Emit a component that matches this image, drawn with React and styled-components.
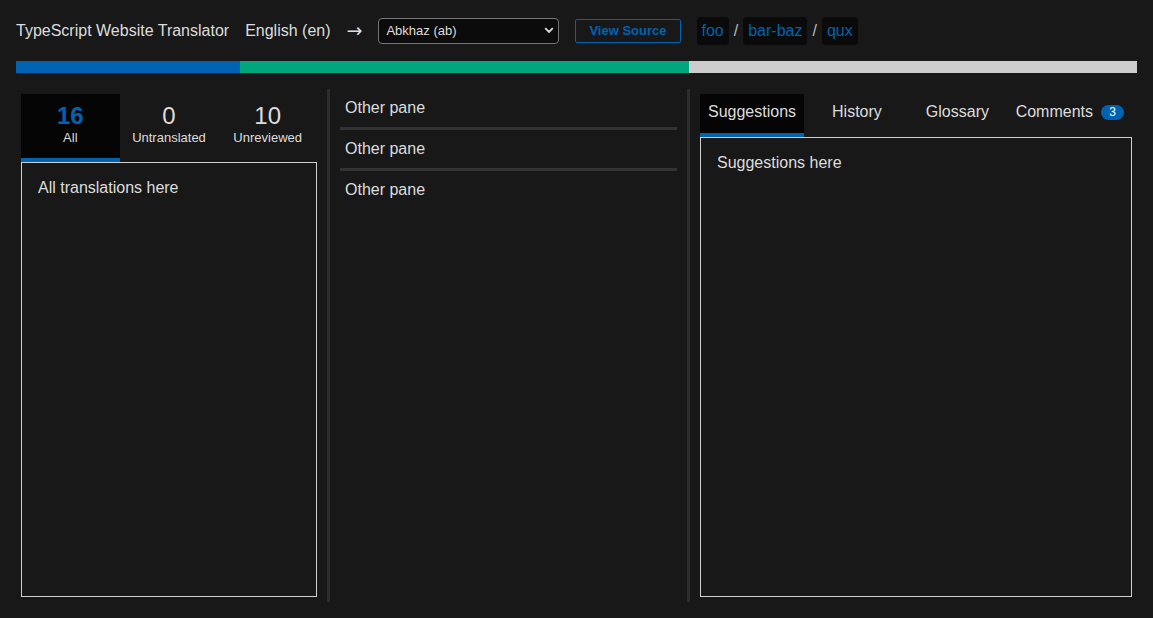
import React from 'react';
import styled, { createGlobalStyle } from 'styled-components';

const BLUE = '#0063b1';

const GlobalStyle = createGlobalStyle`
  html, body {
    margin: 0;
    padding: 0;
    background: #181818;
  }
  body {
    font-family: "Liberation Sans", Arial, sans-serif;
    color: #dddddd;
  }
  * {
    box-sizing: border-box;
  }
`;

const Page = styled.div`
  height: 100vh;
  padding: 16px;
  display: flex;
  flex-direction: column;
`;

const Header = styled.header`
  display: flex;
  align-items: center;
  gap: 16px;
  height: 28px;
  font-size: 16px;
  padding-top: 1px;
`;

const HeaderText = styled.span`
  color: #dddddd;
  white-space: nowrap;
`;

const Arrow = styled.span`
  font-family: "DejaVu Sans", sans-serif;
  font-size: 19px;
  color: #dddddd;
  margin-top: -2px;
`;

const SelectWrap = styled.div`
  position: relative;
  width: 181px;
  height: 26px;
`;

const Select = styled.select`
  appearance: none;
  width: 100%;
  height: 100%;
  padding: 0 24px 0 7px;
  background: #0b0b0b;
  color: #dddddd;
  border: 1px solid #767676;
  border-radius: 4px;
  font-family: "Liberation Sans", Arial, sans-serif;
  font-size: 13px;
  outline: none;
`;

const Chevron = styled.svg`
  position: absolute;
  right: 5px;
  top: 9px;
  pointer-events: none;
`;

const SourceButton = styled.button`
  height: 24px;
  padding: 0 13px;
  background: transparent;
  border: 1px solid ${BLUE};
  border-radius: 2px;
  color: ${BLUE};
  font-family: "Liberation Sans", Arial, sans-serif;
  font-weight: bold;
  font-size: 13px;
  cursor: pointer;
`;

const Crumbs = styled.nav`
  display: flex;
  align-items: center;
  gap: 5px;
`;

const Crumb = styled.a`
  display: flex;
  align-items: center;
  height: 28px;
  padding: 0 5px;
  background: #0a0a0a;
  border-radius: 4px;
  color: ${BLUE};
  font-size: 16px;
  text-decoration: none;
`;

const Slash = styled.span`
  color: #bbbbbb;
  font-size: 16px;
`;

const Progress = styled.div`
  display: flex;
  height: 12px;
  margin-top: 17px;
  margin-bottom: 16px;
`;

const ProgressPart = styled.div`
  height: 100%;
  background: ${(p) => p.$color};
`;

const Main = styled.main`
  flex: 1;
  display: flex;
  min-height: 0;
`;

const Pane = styled.section`
  flex: ${(p) => p.$grow} 1 0;
  display: flex;
  flex-direction: column;
  padding: ${(p) => (p.$flush ? '0 5px 5px' : '5px')};
  min-width: 0;
`;

const Splitter = styled.div`
  width: 3px;
  margin: 0 5px;
  background: #2c2c2c;
`;

const CountTabs = styled.div`
  display: flex;
`;

const CountTab = styled.button`
  flex: 1;
  display: flex;
  flex-direction: column;
  align-items: center;
  padding: 8px 0 13px;
  background: ${(p) => (p.$active ? '#050505' : 'transparent')};
  border: none;
  border-bottom: 4px solid ${(p) => (p.$active ? BLUE : 'transparent')};
  font-family: "Liberation Sans", Arial, sans-serif;
  color: #dddddd;
  cursor: pointer;
`;

const Count = styled.span`
  font-size: 24px;
  line-height: 28px;
  font-weight: ${(p) => (p.$active ? 'bold' : 'normal')};
  color: ${(p) => (p.$active ? BLUE : '#dddddd')};
`;

const CountLabel = styled.span`
  font-size: 13px;
  line-height: 15px;
`;

const Box = styled.div`
  flex: 1;
  border: 1px solid #cfcfcf;
  padding: 16px;
  font-size: 16px;
  line-height: 18px;
`;

const Row = styled.div`
  padding: 10px 5px 10px;
  font-size: 16px;
  line-height: 18px;
  & + & {
    border-top: 3px solid #333333;
  }
`;

const TabBar = styled.div`
  display: flex;
`;

const Tab = styled.button`
  display: flex;
  align-items: center;
  gap: 8px;
  padding: 8px 8px 12px;
  margin-left: ${(p) => (p.$shift === 'auto' ? 'auto' : `${p.$shift || 0}px`)};
  background: ${(p) => (p.$active ? '#050505' : 'transparent')};
  border: none;
  border-bottom: 4px solid ${(p) => (p.$active ? BLUE : 'transparent')};
  color: #dddddd;
  font-family: "Liberation Sans", Arial, sans-serif;
  font-size: 16px;
  line-height: 19px;
  cursor: pointer;
`;

const Badge = styled.span`
  display: inline-flex;
  align-items: center;
  justify-content: center;
  width: 23px;
  height: 15px;
  border-radius: 8px;
  background: ${BLUE};
  color: #ffffff;
  font-size: 12px;
  margin-top: 2px;
`;

const progress = [
  { color: BLUE, value: 20 },
  { color: '#00a67e', value: 40 },
  { color: '#cccccc', value: 40 },
];

const counts = [
  { n: 16, label: 'All', active: true },
  { n: 0, label: 'Untranslated' },
  { n: 10, label: 'Unreviewed' },
];

export default function App() {
  return (
    <>
      <GlobalStyle />
      <Page>
        <Header>
          <HeaderText>TypeScript Website Translator</HeaderText>
          <HeaderText>English (en)</HeaderText>
          <Arrow>→</Arrow>
          <SelectWrap>
            <Select defaultValue="ab">
              <option value="ab">Abkhaz (ab)</option>
            </Select>
            <Chevron width="10" height="7" viewBox="0 0 10 7">
              <path d="M1.2 1.2 L5 5 L8.8 1.2" fill="none" stroke="#dddddd" strokeWidth="1.8" />
            </Chevron>
          </SelectWrap>
          <SourceButton>View Source</SourceButton>
          <Crumbs>
            <Crumb href="#">foo</Crumb>
            <Slash>/</Slash>
            <Crumb href="#">bar-baz</Crumb>
            <Slash>/</Slash>
            <Crumb href="#">qux</Crumb>
          </Crumbs>
        </Header>

        <Progress>
          {progress.map((p, i) => (
            <ProgressPart key={i} $color={p.color} style={{ width: `${p.value}%` }} />
          ))}
        </Progress>

        <Main>
          <Pane $grow={296}>
            <CountTabs>
              {counts.map((c) => (
                <CountTab key={c.label} $active={c.active}>
                  <Count $active={c.active}>{c.n}</Count>
                  <CountLabel>{c.label}</CountLabel>
                </CountTab>
              ))}
            </CountTabs>
            <Box>All translations here</Box>
          </Pane>
          <Splitter />
          <Pane $grow={337} $flush>
            <Row>Other pane</Row>
            <Row>Other pane</Row>
            <Row>Other pane</Row>
          </Pane>
          <Splitter />
          <Pane $grow={432}>
            <TabBar>
              <Tab $active>Suggestions</Tab>
              <Tab $shift={20}>History</Tab>
              <Tab $shift={28}>Glossary</Tab>
              <Tab $shift="auto">
                Comments <Badge>3</Badge>
              </Tab>
            </TabBar>
            <Box>Suggestions here</Box>
          </Pane>
        </Main>
      </Page>
    </>
  );
}
